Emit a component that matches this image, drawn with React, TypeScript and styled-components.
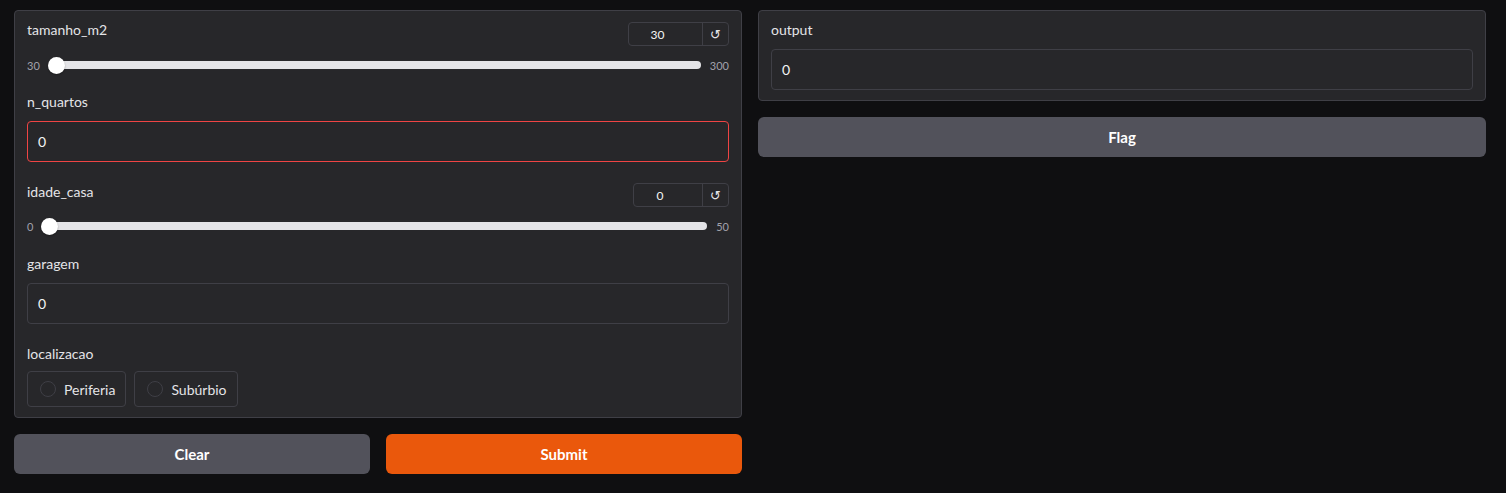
import React from "react";
import styled, { createGlobalStyle } from "styled-components";

const Global = createGlobalStyle`
  html, body { margin: 0; padding: 0; background: #0f0f11; }
  body { font-family: Lato, "Liberation Sans", sans-serif; color: #e4e4e7; }
  * { box-sizing: border-box; }
`;

const Page = styled.div`
  display: flex;
  gap: 16px;
  padding: 10px 20px 19px 14px;
  align-items: flex-start;
`;

const Column = styled.div`
  flex: 1;
  display: flex;
  flex-direction: column;
  gap: 16px;
  min-width: 0;
`;

const Panel = styled.div<{ $pb?: number }>`
  background: #27272a;
  border: 1px solid #3f3f46;
  border-radius: 4px;
  padding: 10px 12px ${(p) => p.$pb ?? 10}px 12px;
  display: flex;
  flex-direction: column;
`;

const Block = styled.div<{ $mt?: number }>`
  display: flex;
  flex-direction: column;
  margin-top: ${(p) => p.$mt ?? 0}px;
`;

const Label = styled.span<{ $mb?: number }>`
  font-size: 14px;
  line-height: 18px;
  color: #e4e4e7;
  margin-bottom: ${(p) => p.$mb ?? 0}px;
`;

const SliderHead = styled.div`
  display: flex;
  justify-content: space-between;
  align-items: flex-start;
`;

const NumberBox = styled.div<{ $w: number; $mt: number }>`
  display: flex;
  width: ${(p) => p.$w}px;
  height: 24px;
  margin-top: ${(p) => p.$mt}px;
  border: 1px solid #3f3f46;
  border-radius: 4px;
  overflow: hidden;
`;

const NumberValue = styled.div`
  flex: 1;
  display: flex;
  align-items: center;
  justify-content: center;
  padding-right: 16px;
  font-size: 12px;
  color: #f4f4f5;
`;

const ResetBtn = styled.div`
  width: 26px;
  border-left: 1px solid #3f3f46;
  display: flex;
  align-items: center;
  justify-content: center;
  font-size: 13px;
  color: #e4e4e7;
  font-family: "DejaVu Sans", sans-serif;
`;

const SliderRow = styled.div<{ $mt: number }>`
  display: flex;
  align-items: center;
  gap: 9px;
  margin-top: ${(p) => p.$mt}px;
  height: 18px;
`;

const RangeText = styled.span`
  font-size: 11px;
  color: #a1a1aa;
`;

const Track = styled.div`
  flex: 1;
  height: 8px;
  border-radius: 4px;
  background: #e4e4e7;
  position: relative;
`;

const Thumb = styled.div`
  position: absolute;
  left: -1px;
  top: 50%;
  width: 17px;
  height: 17px;
  margin-top: -8.5px;
  border-radius: 50%;
  background: #ffffff;
  box-shadow: 0 1px 2px rgba(0, 0, 0, 0.3);
`;

const TextBox = styled.div<{ $error?: boolean }>`
  height: 41px;
  flex: none;
  border: 1px solid ${(p) => (p.$error ? "#ef4444" : "#3f3f46")};
  border-radius: 4px;
  background: #27272a;
  display: flex;
  align-items: center;
  padding: 0 10px;
  font-size: 14px;
  color: #f4f4f5;
`;

const RadioRow = styled.div`
  display: flex;
  gap: 8px;
`;

const RadioOption = styled.div`
  display: flex;
  align-items: center;
  gap: 8px;
  height: 36px;
  padding: 0 10px 0 12px;
  border: 1px solid #3f3f46;
  border-radius: 4px;
  font-size: 14px;
  color: #e4e4e7;
`;

const RadioCircle = styled.span`
  width: 16px;
  height: 16px;
  border-radius: 50%;
  border: 1px solid #3f3f46;
  background: #27272a;
`;

const ButtonRow = styled.div`
  display: flex;
  gap: 16px;
`;

const Button = styled.button<{ $primary?: boolean }>`
  flex: 1;
  height: 40px;
  border: none;
  border-radius: 6px;
  background: ${(p) => (p.$primary ? "#ea580c" : "#52525b")};
  color: #ffffff;
  font-family: Lato, "Liberation Sans", sans-serif;
  font-weight: 700;
  font-size: 15px;
`;

function Slider({
  label,
  value,
  min,
  max,
  boxW,
  mt,
  boxMt,
  rowMt,
}: {
  label: string;
  value: string;
  min: string;
  max: string;
  boxW: number;
  mt?: number;
  boxMt: number;
  rowMt: number;
}) {
  return (
    <Block $mt={mt}>
      <SliderHead>
        <Label>{label}</Label>
        <NumberBox $w={boxW} $mt={boxMt}>
          <NumberValue>{value}</NumberValue>
          <ResetBtn>↺</ResetBtn>
        </NumberBox>
      </SliderHead>
      <SliderRow $mt={rowMt}>
        <RangeText>{min}</RangeText>
        <Track>
          <Thumb />
        </Track>
        <RangeText>{max}</RangeText>
      </SliderRow>
    </Block>
  );
}

export default function App() {
  return (
    <>
      <Global />
      <Page>
        <Column>
          <Panel $pb={10}>
            <Slider label="tamanho_m2" value="30" min="30" max="300" boxW={101} boxMt={1} rowMt={10} />
            <Block $mt={19}>
              <Label $mb={10}>n_quartos</Label>
              <TextBox $error>0</TextBox>
            </Block>
            <Slider label="idade_casa" value="0" min="0" max="50" boxW={96} mt={21} boxMt={0} rowMt={10} />
            <Block $mt={20}>
              <Label $mb={10}>garagem</Label>
              <TextBox>0</TextBox>
            </Block>
            <Block $mt={21}>
              <Label $mb={8}>localizacao</Label>
              <RadioRow>
                <RadioOption>
                  <RadioCircle />
                  Periferia
                </RadioOption>
                <RadioOption>
                  <RadioCircle />
                  Subúrbio
                </RadioOption>
              </RadioRow>
            </Block>
          </Panel>
          <ButtonRow>
            <Button>Clear</Button>
            <Button $primary>Submit</Button>
          </ButtonRow>
        </Column>
        <Column>
          <Panel>
            <Label $mb={10}>output</Label>
            <TextBox>0</TextBox>
          </Panel>
          <ButtonRow>
            <Button>Flag</Button>
          </ButtonRow>
        </Column>
      </Page>
    </>
  );
}
